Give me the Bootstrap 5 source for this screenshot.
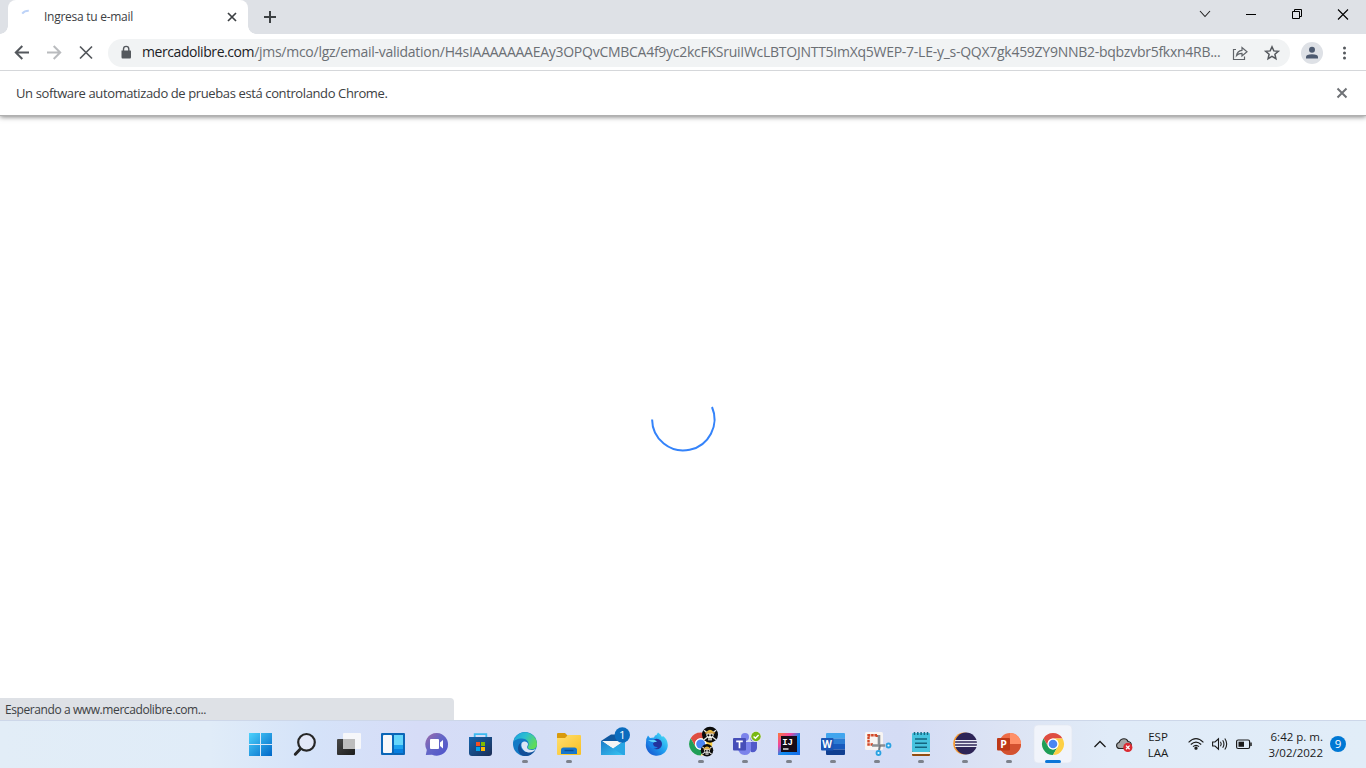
<!DOCTYPE html>
<html lang="es">
<head>
<meta charset="utf-8">
<title>Ingresa tu e-mail</title>
<link href="https://cdn.jsdelivr.net/npm/bootstrap@5.3.0/dist/css/bootstrap.min.css" rel="stylesheet">
<style>
body{font-family:"Open Sans","Noto Sans",sans-serif;color:#3c4043;height:768px;line-height:1.2}
svg{display:block;flex:none;overflow:visible}
.tabstrip{height:34px;background:#dee1e6;padding-left:8px}
.tab-current{width:240px;background:#fff;border-radius:8px 8px 0 0;padding:0 10px 0 12px;position:relative}
.tab-current::before,.tab-current::after{content:"";position:absolute;bottom:0;width:8px;height:8px}
.tab-current::before{left:-8px;background:radial-gradient(circle at 0 0,transparent 7.5px,#fff 8px)}
.tab-current::after{right:-8px;background:radial-gradient(circle at 100% 0,transparent 7.5px,#fff 8px)}
.tab-label{font-size:12px;margin-left:8px;letter-spacing:-.27px}
.winctl{width:46px;height:28px}
.toolbar{height:37px;padding:1px 10px 0 8px;border-bottom:1px solid #d5d7da}
.tool{width:28px;height:28px;margin-right:4px}
.omnibox{height:28px;width:1182px;margin-left:4px;background:#f1f3f4;border-radius:14px;padding:0 10px}
.address{font-size:14px;color:#6b6f74;margin-left:8px;width:1082px;letter-spacing:-.265px}
.address b{font-weight:400;color:#202124;letter-spacing:-.43px}
.profile-pic{width:22px;height:22px;background:#dee1e6}
.infobar{height:45px;padding:0 18px 0 16px;border-bottom:1px solid #b0b0b0;box-shadow:0 1px 5px rgba(0,0,0,.5);clip-path:inset(0 0 -8px 0);font-size:13px;letter-spacing:-.385px}
.infobar span{padding-top:2px}
.status-bubble{width:454px;height:22px;background:#dee1e6;border-radius:0 4px 0 0;padding:2px 0 0 5px;font-size:12px;letter-spacing:-.41px}
.taskbar{height:48px;background:linear-gradient(90deg,#e2edf7 0,#e0ecf8 210px,#d5e3f9 310px,#d6dcf7 420px,#d4def6 540px,#d8e1f7 700px,#d4dcf5 900px,#dde4f4 1010px,#e0ebf8 1110px,#e1edf8 100%);border-top:1px solid #cdd7e9;padding-left:239px}
.taskbar svg{margin-top:-1px}
.tray{font-size:11.5px;color:#1b1b1b;line-height:16px}
.lang{width:52px}
.clock{width:70px}
.notice{width:16px;height:16px;background:#0078d4;font-size:11.5px;color:#fff;margin-left:7px;margin-top:-1px}
</style>
</head>
<body class="d-flex flex-column overflow-hidden bg-white">
<svg width="0" height="0" class="position-absolute" aria-hidden="true">
<defs>
<linearGradient id="gWin" x1="0" y1="0" x2="1" y2="1"><stop offset="0" stop-color="#4cd2fc"/><stop offset="1" stop-color="#0067c8"/></linearGradient>
<linearGradient id="gDark" x1="0" y1="0" x2="1" y2="1"><stop offset="0" stop-color="#484848"/><stop offset="1" stop-color="#1c1c1c"/></linearGradient>
<linearGradient id="gChat" x1="0" y1="0" x2="1" y2="1"><stop offset="0" stop-color="#a06aa8"/><stop offset=".45" stop-color="#6466c6"/><stop offset="1" stop-color="#4d52cc"/></linearGradient>
<linearGradient id="gStore" x1="0" y1="0" x2="1" y2="1"><stop offset="0" stop-color="#1465ae"/><stop offset="1" stop-color="#1c2d55"/></linearGradient>
<linearGradient id="gEdge" x1="0" y1="0" x2="1" y2=".5"><stop offset="0" stop-color="#1c9de0"/><stop offset=".5" stop-color="#2bbfd0"/><stop offset="1" stop-color="#5edb5b"/></linearGradient>
<linearGradient id="gFold" x1="0" y1="0" x2="1" y2="1"><stop offset="0" stop-color="#ffdf70"/><stop offset="1" stop-color="#f8bf22"/></linearGradient>
<linearGradient id="gMail" x1="0" y1="0" x2="1" y2="1"><stop offset="0" stop-color="#1d7cc9"/><stop offset="1" stop-color="#38c5f2"/></linearGradient>
<linearGradient id="gFox" x1="1" y1="0" x2="0" y2="1"><stop offset="0" stop-color="#55ecf5"/><stop offset=".5" stop-color="#1f9df0"/><stop offset="1" stop-color="#1648c8"/></linearGradient>
<linearGradient id="gIJ" x1="0" y1="0" x2="1" y2="1"><stop offset="0" stop-color="#fc7a3a"/><stop offset=".3" stop-color="#f4439c"/><stop offset=".55" stop-color="#0d8cf0"/><stop offset="1" stop-color="#1667e8"/></linearGradient>
<g id="chromeDisc"><circle r="11" fill="#fff"/>
<path d="M-9.53-5.5A11 11 0 0 1 9.53-5.5L0-5.5A5.5 5.5 0 0 0-4.76 2.75Z" fill="#de4d41"/>
<path d="M-9.53-5.5L-4.76 2.75A5.5 5.5 0 0 0 4.76 2.75L0 11A11 11 0 0 1-9.53-5.5Z" fill="#1f9e57"/>
<path d="M9.53-5.5A11 11 0 0 1 0 11L4.76 2.75A5.5 5.5 0 0 0 0-5.5Z" fill="#fdd045"/>
<circle r="5.4" fill="#fff"/><circle r="4.3" fill="#4a86f3"/></g>
<g id="skull"><circle r="8" fill="#0b0b0b"/><path d="M-6-4.5L6 5M6-4.5L-6 5" stroke="#e9e9e4" stroke-width="1.3"/><ellipse cy="-.3" rx="3.7" ry="3.6" fill="#f5f4ee"/><path d="M-4-2.2Q0-7.5 4-2.2Z" fill="#e5b73b"/><path d="M-5-1.8H5" stroke="#c98a22" stroke-width="1.2"/><circle cx="-1.6" cy=".6" r="1.1"/><circle cx="1.6" cy=".6" r="1.1"/><rect x="-2" y="3" width="4" height="2.6" fill="#f5f4ee"/><path d="M-2 4.2H2" stroke="#111" stroke-width=".6"/></g>
<rect id="runDot" x="19" y="40" width="6" height="3" rx="1.5" fill="#7d828c"/>
</defs>
</svg>

<header class="tabstrip d-flex flex-shrink-0">
  <div class="tab-current d-flex align-items-center">
    <svg width="16" height="16"><path d="M2.200 4.600Q4.700 1.700 8.800 1.800" fill="none" stroke="#bdd3f8" stroke-width="2"/></svg>
    <span class="tab-label text-nowrap">Ingresa tu e-mail</span>
    <svg class="ms-auto" width="12" height="12"><path d="M2 2L10 10M10 2L2 10" stroke="#3c4043" stroke-width="1.700"/></svg>
  </div>
  <svg class="mt-2 ms-2" width="28" height="20"><path d="M14 3V15M8 9H20" stroke="#3c4043" stroke-width="2"/></svg>
  <div class="d-flex ms-auto">
    <svg class="winctl"><path d="M18 11L23 16.500L28 11" fill="none" stroke="#222" stroke-width="1.100"/></svg>
    <svg class="winctl"><path d="M18 14.500H28" stroke="#000"/></svg>
    <svg class="winctl"><path d="M18.500 11.500H25.500V18.500H18.500ZM20.500 11.500V9.500H27.500V16.500H25.500" fill="none" stroke="#000"/></svg>
    <svg class="winctl"><path d="M18 9.500L28 19.500M28 9.500L18 19.500" stroke="#000" stroke-width="1.100"/></svg>
  </div>
</header>

<nav class="toolbar d-flex align-items-center flex-shrink-0">
  <svg class="tool" viewBox="0 0 28 28"><path d="M21 13.500H8M14.300 7L7.800 13.500L14.300 20" fill="none" stroke="#54585d" stroke-width="2"/></svg>
  <svg class="tool" viewBox="0 0 28 28"><path d="M7 13.500H20M13.700 7L20.200 13.500L13.700 20" fill="none" stroke="#b9bbbe" stroke-width="2"/></svg>
  <svg class="tool" viewBox="0 0 28 28"><path d="M8 7.500L20 19.500M20 7.500L8 19.500" stroke="#54585d" stroke-width="1.700"/></svg>
  <div class="omnibox d-flex align-items-center">
    <svg width="16" height="16"><path d="M3.500 5.500H12.500Q13 5.500 13 6.500V12Q13 13.500 12 13.500H4.500Q3.500 13.500 3.500 12Z" fill="#54585d"/><path d="M5.500 6V4A2.600 2.600 0 0 1 10.800 4V6" fill="none" stroke="#54585d" stroke-width="1.400"/></svg>
    <div class="address text-nowrap"><b>mercadolibre.com</b>/jms/mco/lgz/email-validation/H4sIAAAAAAAEAy3OPQvCMBCA4f9yc2kcFKSruiIWcLBTOJNTT5ImXq5WEP-7-LE-y_s-QQX7gk459ZY9NNB2-bqbzvbr5fkxn4RB...</div>
    <svg class="ms-auto" width="16" height="16"><path d="M4 4.500H1.500V14.500H12.500V11.500" fill="none" stroke="#5f6368" stroke-width="1.200"/><path d="M4.500 10.500Q5.200 5.800 10 5.300V2.500L15 6.800L10 11V8.300Q6.500 8.200 4.500 10.500Z" fill="none" stroke="#5f6368" stroke-width="1.200"/></svg>
    <svg class="ms-3" width="16" height="16"><path d="M8 1.800L9.800 5.900L14.300 6.300L10.900 9.200L11.900 13.600L8 11.300L4.100 13.600L5.100 9.200L1.700 6.300L6.200 5.900Z" fill="none" stroke="#54585d" stroke-width="1.500"/></svg>
  </div>
  <div class="profile-pic rounded-circle ms-auto me-3"><svg width="22" height="22"><circle cx="11" cy="7.800" r="3" fill="#4d5a70"/><path d="M5 16.500V15Q5 12.300 11 12.300T17 15V16.500Z" fill="#4d5a70"/></svg></div>
  <svg width="13" height="16" class="me-1" fill="#54585d"><circle cx="5.500" cy="3" r="1.500"/><circle cx="5.500" cy="8" r="1.500"/><circle cx="5.500" cy="13" r="1.500"/></svg>
</nav>

<div class="infobar d-flex align-items-center flex-shrink-0">
  <span>Un software automatizado de pruebas está controlando Chrome.</span>
  <svg class="ms-auto" width="12" height="12"><path d="M1.500 1.500L10.500 10.500M10.500 1.500L1.500 10.500" stroke="#6f7276" stroke-width="2"/></svg>
</div>

<main class="d-flex flex-column flex-grow-1">
  <div class="flex-grow-1 d-flex justify-content-center align-items-center pt-4">
    <svg width="64" height="64" viewBox="0 0 64 64"><path d="M1.100 32.500A31.200 31.200 0 1 0 61 20" fill="none" stroke="#3483fa" stroke-width="2"/></svg>
  </div>
  <div class="status-bubble d-flex align-items-center">Esperando a www.mercadolibre.com...</div>
</main>

<footer class="taskbar d-flex flex-shrink-0">
  <svg width="44" height="48"><path d="M10 13H21V24H10ZM22 13H33V24H22ZM10 25H21V36H10ZM22 25H33V36H22Z" fill="url(#gWin)"/></svg>
  <svg width="44" height="48"><circle cx="23.500" cy="22.300" r="8.300" fill="#e3e8f8" stroke="#262626" stroke-width="2.200"/><path d="M17.300 29L12.300 34.200" stroke="#262626" stroke-width="3" stroke-linecap="round"/></svg>
  <svg width="44" height="48"><rect x="10" y="19" width="18" height="16" rx="1" fill="url(#gDark)"/><rect x="16" y="13" width="18" height="16" rx="1" fill="#fafafa" fill-opacity=".9"/><rect x="16" y="19" width="12" height="10" fill="#bdbdbd"/></svg>
  <svg width="44" height="48"><rect x="10" y="13" width="24" height="22" rx="1" fill="#0a66b7"/><rect x="12" y="15" width="9" height="18" rx="1" fill="#f7f8fa"/><path d="M23 15H32V25H23Z" fill="#65d6fb"/><path d="M23 25H32V29H23Z" fill="#1ba2ef"/><path d="M23 29H32V33H23Z" fill="#077fe0"/></svg>
  <svg width="44" height="48"><path d="M22 13A11.400 11.400 0 1 1 17 34.800L10.800 35L11.800 30A11.400 11.400 0 0 1 22 13Z" fill="url(#gChat)"/><rect x="15" y="19" width="9" height="10" rx="1" fill="#fff"/><path d="M25 22.500L28 20V28.500L25 26Z" fill="#fff"/></svg>
  <svg width="44" height="48"><path d="M15.700 18V14.200H27.300V18" fill="none" stroke="#3cbaf0" stroke-width="1.800"/><path d="M10 17H33V33Q33 36 30 36H13Q10 36 10 33Z" fill="url(#gStore)"/><path d="M17 22H21V26H17Z" fill="#f25022"/><path d="M22 22H26V26H22Z" fill="#7fba00"/><path d="M17 27H21V31H17Z" fill="#00a4ef"/><path d="M22 27H26V31H22Z" fill="#ffb900"/></svg>
  <svg width="44" height="48"><circle cx="22" cy="24" r="12" fill="#137ac6"/><path d="M10.200 22A12 12 0 0 1 34 24C34 28 31 29.500 28 29.300C24.500 29 24 27.500 25.300 26C27 22 23 18.500 19 18.500C14 18.500 11 20.500 10.200 22Z" fill="url(#gEdge)"/><path d="M18 22.500C16 27 19.500 32.500 26 32.300Q30 32 32 30.300C29 35.500 24 36.800 20 35.700C14 34 13.500 25.500 18 22.500Z" fill="#134f98"/><path d="M18.500 23.500C20 20.500 24.500 21 25 24C25 26 23.700 26.300 24.200 28C25 30 29.500 31 33 28.500C31 33 25 33.500 21.500 31C19 29 17.800 26 18.500 23.500Z" fill="#dce6f6"/><use href="#runDot"/></svg>
  <svg width="44" height="48"><path d="M10 14Q10 13 11 13H18L21 16V19H10Z" fill="#d89a0c"/><path d="M10 18H18L21 15H33Q34 15 34 16V34Q34 35 33 35H11Q10 35 10 34Z" fill="url(#gFold)"/><path d="M14 34V30Q14 27.500 16.500 27.500H27.500Q30 27.500 30 30V34Z" fill="#1676cc"/><path d="M17.500 30.500H26.500" stroke="#0b4f93" stroke-width="1.400"/><use href="#runDot"/></svg>
  <svg width="44" height="48"><path d="M10 21L20 14.500H27L34 21V28H10Z" fill="#1058a0"/><path d="M11 21H33L22 29Z" fill="#f5f5f5"/><path d="M10 21L22 28.500L34 20.500V35H10Z" fill="#2aa7e4"/><path d="M10 35V21L32 35Z" fill="url(#gMail)"/><circle cx="31.300" cy="15" r="7.700" fill="#0b6cbe"/><text x="31.300" y="19" text-anchor="middle" font-size="11.500" fill="#fff">1</text></svg>
  <svg width="44" height="48"><path d="M13 15.500L15 18L19 17.500L20 15.500Q22 15 23 12.500Q26 14 27 17L28 16Q32.500 19 32.800 25A11 10.700 0 1 1 11 23Q10.700 18.500 13 15.500Z" fill="url(#gFox)"/><circle cx="21.700" cy="24" r="5.300" fill="#24349d"/><path d="M12.500 20.500Q17 17.500 22.500 21.500Q19 21 18 23.500Q18.500 27.500 23 27Q19 30.500 15 27Q12.500 24.500 12.500 20.500Z" fill="#1c83e8"/><path d="M13 20L19.500 20L22 21.800Q18 22.800 15.500 21.500Z" fill="#63d4f8"/></svg>
  <svg width="44" height="48"><use href="#chromeDisc" transform="translate(21.700 24) scale(1.050)"/><use href="#skull" transform="translate(31 14.700)"/><use href="#skull" transform="translate(28 30.300) scale(.780)"/><use href="#runDot"/></svg>
  <svg width="44" height="48"><circle cx="22" cy="17" r="4" fill="#7b83eb"/><circle cx="30.500" cy="18.500" r="3" fill="#5059c9"/><path d="M24 22H34V28Q33.500 33 28 32Z" fill="#5059c9"/><path d="M15 22H28V29Q27.500 35 21.500 35Q16 34.500 15 29Z" fill="#7b83eb"/><rect x="10" y="18" width="13" height="12.500" rx="1" fill="#464eb8"/><path d="M13.200 21.300H19.800M16.500 21.300V28.200" stroke="#fff" stroke-width="1.700"/><circle cx="33" cy="16.500" r="5.600" fill="#e3e5ee"/><circle cx="33" cy="16.500" r="4.700" fill="#79b814"/><path d="M30.600 16.500L32.400 18.300L35.600 14.900" fill="none" stroke="#fff" stroke-width="1.400"/><use href="#runDot"/></svg>
  <svg width="44" height="48"><path d="M11 13H33V35H11Z" fill="url(#gIJ)"/><path d="M14 16H30V32H14Z" fill="#170b16"/><text x="15.200" y="24.500" font-size="9" font-weight="700" fill="#fff" style="font-family:'Liberation Mono',monospace">IJ</text><path d="M16 29H21.500" stroke="#fff" stroke-width="1.300"/><use href="#runDot"/></svg>
  <svg width="44" height="48"><path d="M15 14Q15 13 16 13H33Q34 13 34 14V18.500H15Z" fill="#41a5ee"/><path d="M15 18.500H34V24H15Z" fill="#2b7cd3"/><path d="M15 24H34V29.500H15Z" fill="#185abd"/><path d="M15 29.500H34V34Q34 35 33 35H16Q15 35 15 34Z" fill="#103f91"/><rect x="10" y="18" width="12.500" height="12.500" rx="1" fill="#1b56b5"/><text x="16.200" y="28" text-anchor="middle" font-size="10" font-weight="700" fill="#fff">W</text><use href="#runDot"/></svg>
  <svg width="44" height="48"><rect x="10" y="12" width="18" height="18" rx="1.500" fill="#f8f5f3"/><path d="M22 15.200H13.500V24.500H18M22 15V17" fill="none" stroke="#d24726" stroke-width="2.400" stroke-dasharray="2.600 .7"/><path d="M24 15V26M17 25.500H30" stroke="#8b8f93" stroke-width="2.600"/><path d="M25 25L24 30" stroke="#777b80" stroke-width="2"/><circle cx="33.500" cy="25.500" r="2" fill="#e9f5fd" stroke="#2ba2e2" stroke-width="1.800"/><circle cx="23.500" cy="33" r="2" fill="#e9f5fd" stroke="#2ba2e2" stroke-width="1.800"/><use href="#runDot"/></svg>
  <svg width="44" height="48"><path d="M13 31H31V35Q31 36 30 36H14Q13 36 13 35Z" fill="#914d12"/><path d="M13 32H31V34H13Z" fill="#f4f1ea"/><rect x="13" y="13" width="18" height="19" rx="1" fill="#47c3de"/><path d="M15.500 12V15M18.800 12V15M22.100 12V15M25.400 12V15M28.500 12V15" stroke="#176b86" stroke-width="1.500"/><path d="M16 19H28M16 23.200H28M16 27.200H28" stroke="#14657f" stroke-width="1.600"/><use href="#runDot"/></svg>
  <svg width="44" height="48"><circle cx="21.200" cy="23.500" r="11" fill="#f79a32"/><circle cx="23" cy="23.500" r="11" fill="#2d2457"/><path d="M12 20.700H34M12 23.500H34M12 26.300H34" stroke="#e9eaf5" stroke-width="1.300"/><use href="#runDot"/></svg>
  <svg width="44" height="48"><circle cx="23" cy="24" r="11" fill="#ed6c47"/><path d="M23 13A11 11 0 0 1 34 24H23Z" fill="#ff9068"/><path d="M12 24H34A11 11 0 0 1 12 24Z" fill="#d35230"/><rect x="10" y="18" width="13" height="12.500" rx="1" fill="#be3817"/><text x="16.500" y="28" text-anchor="middle" font-size="10.500" font-weight="700" fill="#fff">P</text><use href="#runDot"/></svg>
  <svg width="44" height="48"><rect x="3" y="5" width="38" height="38" rx="4" fill="#f1f4fb" stroke="#e2e6f1" stroke-width=".7"/><use href="#chromeDisc" transform="translate(22 24)"/><rect x="14" y="40" width="16" height="3" rx="1.500" fill="#0a76d8"/></svg>

  <div class="tray d-flex align-items-center flex-grow-1">
    <svg style="margin-left:18px" width="14" height="16"><path d="M1.500 11L7 5.500L12.500 11" fill="none" stroke="#1b1b1b" stroke-width="1.300"/></svg>
    <svg style="margin-left:9px" width="16" height="16"><path d="M4 12.500Q.6 12.500.6 9.500Q.6 7 3 6.500Q4.500 2.800 8 2.800Q11 2.800 12 5.500Q15.300 5.800 15.300 9Q15.300 12.500 12 12.500Z" fill="#a6a6a6" stroke="#222" stroke-width="1.100"/><circle cx="11.800" cy="11.400" r="4.600" fill="#db2b32"/><path d="M10 9.600L13.600 13.200M13.600 9.600L10 13.200" stroke="#fff" stroke-width="1.300"/></svg>
    <div class="lang text-center">ESP<br>LAA</div>
    <svg class="ms-1" width="16" height="16" fill="none" stroke="#1b1b1b" stroke-width="1.100"><path d="M.6 6.300Q8-.9 15.400 6.300M2.800 8.500Q8 3.600 13.200 8.500M5 10.700Q8 7.900 11 10.700"/><circle cx="8" cy="12.200" r="1.100" fill="#1b1b1b"/></svg>
    <svg class="ms-2" width="16" height="16" fill="none" stroke="#1b1b1b" stroke-width="1.100"><path d="M.6 6H3L6.500 2.800V13.200L3 10H.6ZM8.500 5.800Q10 8 8.500 10.200M10.700 4.200Q13.200 8 10.700 11.800M12.800 2.500Q16.600 8 12.800 13.500"/></svg>
    <svg class="ms-2" width="17" height="16"><rect x=".6" y="4" width="13" height="8.500" rx="1.500" fill="none" stroke="#1b1b1b" stroke-width="1.200"/><path d="M2.500 5.700H8V10.800H2.500Z" fill="#1b1b1b"/><path d="M15 6.500V10" stroke="#1b1b1b" stroke-width="1.500"/></svg>
    <div class="clock text-end text-nowrap">6:42 p. m.<br>3/02/2022</div>
    <div class="notice rounded-circle d-flex align-items-center justify-content-center">9</div>
  </div>
</footer>
<script src="https://cdn.jsdelivr.net/npm/bootstrap@5.3.0/dist/js/bootstrap.bundle.min.js"></script>
</body>
</html>
